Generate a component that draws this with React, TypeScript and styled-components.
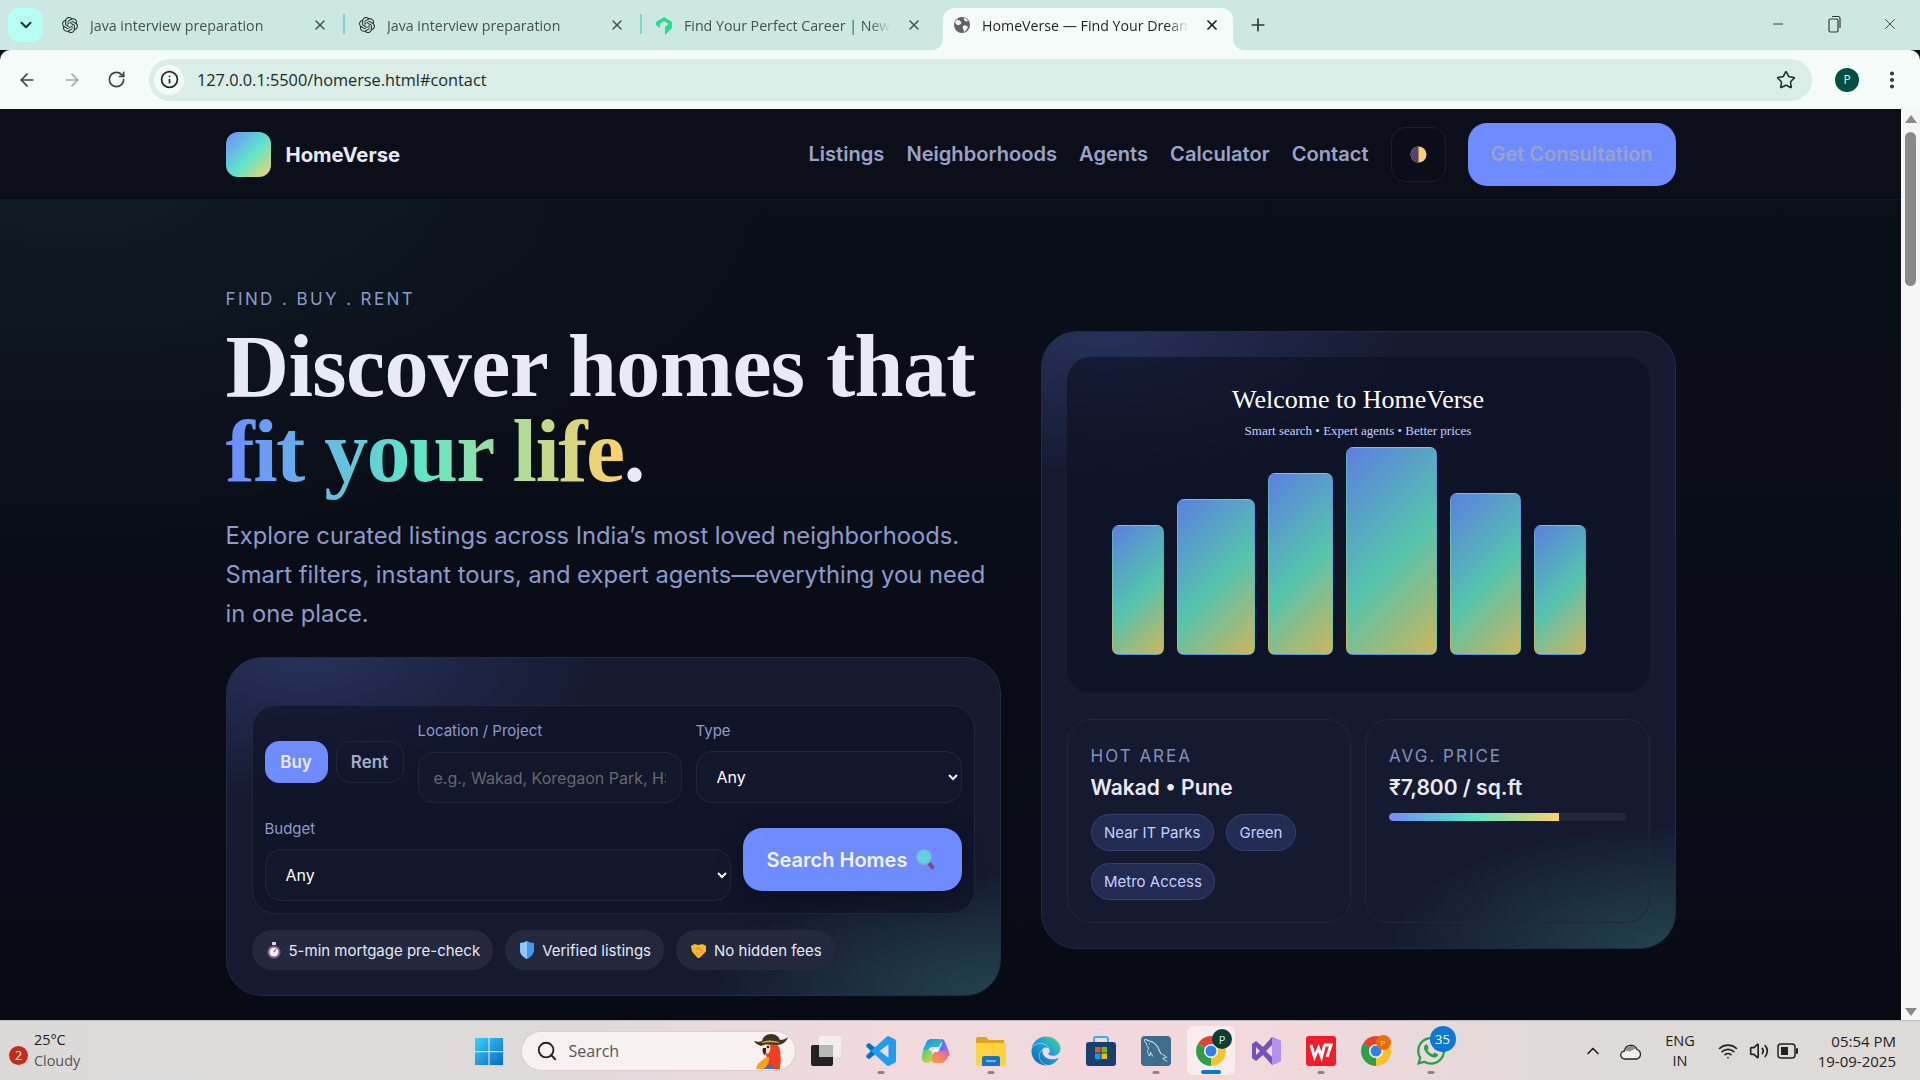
import { Fragment } from "react"
import styled, { createGlobalStyle } from "styled-components"
import {
  ArrowLeft,
  ArrowRight,
  RotateCw,
  Info,
  Star,
  EllipsisVertical,
  ChevronDown,
  ChevronUp,
  X,
  Plus,
  Minus,
  Search,
  Wifi,
  Volume2,
} from "lucide-react"
import { SiOpenai } from "react-icons/si"
import { GrMysql } from "react-icons/gr"
import { FaEdge, FaWhatsapp } from "react-icons/fa"

const GlobalStyle = createGlobalStyle`
  * { box-sizing: border-box; }
  html, body { margin: 0; padding: 0; height: 100%; overflow: hidden; }
  body { font-family: "Inter", "Liberation Sans", sans-serif; background: #0b0f1a; }
  #root { height: 100%; }
`

const Screen = styled.div`
  width: 1920px;
  height: 1080px;
  display: flex;
  flex-direction: column;
  overflow: hidden;
`

/* browser chrome */

const TabStrip = styled.div`
  height: 50px;
  flex: none;
  display: flex;
  align-items: flex-end;
  padding-left: 8px;
  background: #cde8e2;
  font-family: "Open Sans", "Noto Sans", sans-serif;
`

const TabSearch = styled.div`
  width: 35px;
  height: 34px;
  margin: 0 4px 8px 0;
  border-radius: 11px;
  background: #b6fdf3;
  color: #16302b;
  display: flex;
  align-items: center;
  justify-content: center;
`

const Tab = styled.div<{ $active?: boolean }>`
  position: relative;
  height: 42px;
  width: ${(p) => (p.$active ? 290 : 297)}px;
  margin-left: ${(p) => (p.$active ? 5 : 0)}px;
  padding: ${(p) => (p.$active ? "0 13px 8px 11px" : "0 16px 8px 15px")};
  display: flex;
  align-items: center;
  gap: 12px;
  border-radius: 12px 12px 0 0;
  background: ${(p) => (p.$active ? "#f5fbf8" : "transparent")};
  color: ${(p) => (p.$active ? "#1c2523" : "#44524e")};
  font-size: 14.2px;

  &::before,
  &::after {
    content: ${(p) => (p.$active ? '""' : "none")};
    position: absolute;
    bottom: 0;
    width: 12px;
    height: 12px;
  }
  &::before {
    left: -12px;
    background: radial-gradient(circle at 0 0, transparent 12px, #f5fbf8 12.5px);
  }
  &::after {
    right: -12px;
    background: radial-gradient(circle at 100% 0, transparent 12px, #f5fbf8 12.5px);
  }
`

const TabSeparator = styled.div`
  width: 2px;
  height: 20px;
  margin: 0 -1px 16px;
  background: #7fd6c9;
`

const TabIcon = styled.div`
  width: 16px;
  height: 16px;
  flex: none;
  display: flex;
  color: #26302e;
`

const TabTitle = styled.div`
  flex: 1;
  min-width: 0;
  margin-right: 4px;
  white-space: nowrap;
  overflow: hidden;
  -webkit-mask-image: linear-gradient(90deg, #000 90%, transparent);
  mask-image: linear-gradient(90deg, #000 90%, transparent);
`

const TabClose = styled.div<{ $active?: boolean }>`
  width: 16px;
  height: 16px;
  flex: none;
  display: flex;
  align-items: center;
  justify-content: center;
  color: ${(p) => (p.$active ? "#1c2523" : "#44524e")};
`

const NewTab = styled.div`
  width: 20px;
  height: 20px;
  margin: 0 0 15px 15px;
  color: #2c3a37;
  display: flex;
`

const WindowControls = styled.div`
  margin-left: auto;
  height: 100%;
  display: flex;
  align-items: center;
  padding-right: 21px;
  gap: 38px;
  color: #2c3a37;
`

const WindowButton = styled.div`
  width: 18px;
  height: 18px;
  margin-bottom: 2px;
  display: flex;
  align-items: center;
  justify-content: center;
`

const Toolbar = styled.div`
  height: 59px;
  flex: none;
  display: flex;
  align-items: center;
  background: #f5fbf8;
  border-radius: 10px 10px 0 0;
  padding: 0 14px 0 17px;
`

const NavIcon = styled.div<{ $dim?: boolean }>`
  width: 20px;
  height: 20px;
  margin-right: 25px;
  display: flex;
  color: ${(p) => (p.$dim ? "#a3b0ac" : "#3b4a47")};
`

const Omnibox = styled.div`
  width: 1663px;
  height: 42px;
  margin-left: -3px;
  display: flex;
  align-items: center;
  border-radius: 21px;
  background: #daede7;
  padding: 0 16px 0 5px;
  font-family: "Open Sans", "Noto Sans", sans-serif;
  font-size: 16.3px;
  color: #1c2b28;
`

const SiteInfo = styled.div`
  width: 30px;
  height: 30px;
  margin-right: 13px;
  border-radius: 50%;
  background: #f5fbf8;
  display: flex;
  align-items: center;
  justify-content: center;
  color: #1c2b28;
`

const BookmarkStar = styled(Star)`
  margin-left: auto;
`

const Avatar = styled.div`
  width: 24px;
  height: 24px;
  margin-left: 23px;
  border-radius: 50%;
  background: #014f41;
  color: #e4f5ef;
  font-size: 12px;
  font-family: "Open Sans", sans-serif;
  display: flex;
  align-items: center;
  justify-content: center;
`

const Menu = styled.div`
  margin-left: 22px;
  display: flex;
  color: #2c3a37;
`

const Viewport = styled.div`
  flex: 1;
  min-height: 0;
  display: flex;
`

const Scrollbar = styled.div`
  width: 19px;
  flex: none;
  display: flex;
  flex-direction: column;
  align-items: center;
  background: #f6f6f6;
  padding: 6px 0 4px;
`

const ScrollArrow = styled.div<{ $down?: boolean }>`
  width: 0;
  height: 0;
  border-left: 6px solid transparent;
  border-right: 6px solid transparent;
  ${(p) => (p.$down ? "border-top: 8px solid #8a8a8a; margin-top: auto;" : "border-bottom: 8px solid #8a8a8a;")}
`

const ScrollThumb = styled.div`
  width: 11px;
  height: 154px;
  margin-top: 9px;
  border-radius: 6px;
  background: #8a8a8a;
`

/* site */

const Site = styled.div`
  flex: 1;
  min-width: 0;
  overflow: hidden;
  background:
    radial-gradient(1000px 520px at 4% 8%, rgba(94, 230, 200, 0.06), transparent 70%),
    linear-gradient(180deg, #0b0f1a 0%, #080b14 100%);
`

const Header = styled.header`
  height: 91px;
  background: #0c0f1a;
  border-bottom: 1px solid rgba(255, 255, 255, 0.04);
`

const Container = styled.div`
  width: 1450px;
  margin: 0 auto;
`

const HeaderRow = styled(Container)`
  height: 100%;
  display: flex;
  align-items: center;
`

const Logo = styled.div`
  width: 45px;
  height: 45px;
  border-radius: 12px;
  background: linear-gradient(135deg, #6e8bff, #5ee6c8 55%, #ffd166);
`

const Brand = styled.div`
  margin-left: 15px;
  font-size: 20.3px;
  font-weight: 700;
  color: #e8ebf5;
`

const NavLinks = styled.nav`
  margin-left: auto;
  display: flex;
  align-items: center;
  gap: 22px;
`

const NavLink = styled.a`
  font-size: 20.1px;
  font-weight: 600;
  color: #9aa3c7;
`

const ThemeToggle = styled.div`
  width: 55px;
  height: 55px;
  border-radius: 14px;
  border: 1px solid #1b1f2e;
  background: #0b0e18;
  display: flex;
  align-items: center;
  justify-content: center;
`

const CtaButton = styled.div`
  width: 208px;
  height: 63px;
  border-radius: 19px;
  background: #6e8bff;
  color: #9aa3c7;
  font-size: 20px;
  font-weight: 600;
  display: flex;
  align-items: center;
  justify-content: center;
`

const Hero = styled(Container)`
  padding-top: 87px;
  display: grid;
  grid-template-columns: 775px 635px;
  column-gap: 40px;
  align-items: center;
`

const Eyebrow = styled.div`
  font-size: 17px;
  line-height: 24px;
  letter-spacing: 2.4px;
  color: #8d9acb;
`

const Headline = styled.h1`
  margin: 13px 0 0;
  font-family: "Liberation Serif", serif;
  font-weight: 700;
  font-size: 88px;
  line-height: 85px;
  letter-spacing: -0.6px;
  color: #e8ebf5;
`

const Rainbow = styled.span`
  letter-spacing: -1.6px;
  background: linear-gradient(90deg, #6e8bff, #5ee6c8 48%, #ffd166);
  -webkit-background-clip: text;
  background-clip: text;
  color: transparent;
`

const Lead = styled.p`
  margin: 22px 0 0;
  font-size: 23.76px;
  line-height: 39px;
  color: #8d9acb;
`

const Panel = styled.div`
  border-radius: 36px;
  border: 1px solid #232a44;
  background:
    radial-gradient(420px 200px at 10% 0%, rgba(110, 139, 255, 0.2), transparent 72%),
    radial-gradient(400px 170px at 100% 100%, rgba(94, 230, 200, 0.2), transparent 72%),
    #151a30;
`

const SearchPanel = styled(Panel)`
  margin-top: 24px;
  height: 339px;
  padding: 47px 25px 0;
`

const SearchBox = styled.div`
  height: 209px;
  border: 1px solid #20263e;
  border-radius: 24px;
  background: rgba(13, 17, 36, 0.6);
  padding: 14px 12px 12px;
  display: flex;
  flex-direction: column;
  gap: 15px;
`

const SearchRow = styled.div<{ $gap: number }>`
  display: flex;
  align-items: center;
  gap: ${(p) => p.$gap}px;
`

const Toggle = styled.div`
  display: flex;
  flex: none;
  gap: 8px;
`

const ToggleButton = styled.div<{ $on?: boolean }>`
  width: ${(p) => (p.$on ? 63 : 68)}px;
  height: 42px;
  border-radius: 14px;
  border: 1px solid ${(p) => (p.$on ? "#6e8bff" : "#20263e")};
  background: ${(p) => (p.$on ? "#6e8bff" : "transparent")};
  color: ${(p) => (p.$on ? "#e8ebf5" : "#a6aecd")};
  font-size: 17px;
  font-weight: 600;
  display: flex;
  align-items: center;
  justify-content: center;
`

const Field = styled.label<{ $width?: number }>`
  ${(p) => (p.$width ? `width: ${p.$width}px; flex: none;` : "flex: 1;")}
  display: flex;
  flex-direction: column;
  gap: 10px;
  min-width: 0;
`

const FieldLabel = styled.span`
  font-size: 15px;
  line-height: 21px;
  color: #8d9acb;
`

const TextInput = styled.input`
  height: 51px;
  width: 100%;
  margin-top: 1px;
  padding: 0 15px;
  border-radius: 16px;
  border: 1px solid #20263e;
  background: #12172b;
  color: #fff;
  font: 400 16px "Inter", sans-serif;
  outline: none;

  &::placeholder {
    color: #66676f;
  }
`

const Dropdown = styled.select`
  height: 52px;
  width: 100%;
  padding: 0 16px;
  border-radius: 16px;
  border: 1px solid #20263e;
  background: #12172b;
  color: #fff;
  font: 400 16px "Inter", sans-serif;
  outline: none;
`

const SearchButton = styled.div`
  width: 219px;
  height: 63px;
  flex: none;
  border-radius: 19px;
  background: #6e8bff;
  color: #f2f4ff;
  font-size: 20px;
  font-weight: 600;
  display: flex;
  align-items: center;
  justify-content: center;
  gap: 9px;
  box-shadow: 0 10px 24px rgba(0, 0, 0, 0.25);
`

const Perks = styled.div`
  margin-top: 16px;
  display: flex;
  gap: 12px;
`

const Perk = styled.div`
  height: 40px;
  padding: 0 13px 0 15px;
  border-radius: 20px;
  background: #23283f;
  color: #e4e8f6;
  font-size: 15px;
  display: flex;
  align-items: center;
  gap: 8px;
`

const ShowcasePanel = styled(Panel)`
  margin-bottom: 3px;
  padding: 25px;
  display: flex;
  flex-direction: column;
  gap: 26px;
`

const Visual = styled.div`
  height: 336px;
  border-radius: 24px;
  background: rgba(11, 15, 34, 0.6);
  display: flex;
  flex-direction: column;
  font-family: "Liberation Serif", serif;
  text-align: center;
`

const VisualTitle = styled.div`
  margin-top: 28px;
  font-size: 26px;
  line-height: 30px;
  color: #fff;
`

const VisualSubtitle = styled.div`
  margin-top: 8px;
  font-size: 13px;
  line-height: 16px;
  color: #c5d0ff;
`

const Bars = styled.div`
  height: 208px;
  margin-top: 8px;
  padding-left: 45px;
  display: flex;
  align-items: flex-end;
  gap: 13px;
`

const Bar = styled.div<{ $w: number; $h: number }>`
  width: ${(p) => p.$w}px;
  height: ${(p) => p.$h}px;
  border-radius: 7px;
  border: 1px solid rgba(255, 255, 255, 0.05);
  background: linear-gradient(135deg, #5c7fe0, #55c4ae 54%, #cfb45c);
`

const Stats = styled.div`
  display: grid;
  grid-template-columns: 1fr 1fr;
  gap: 14px;
`

const Stat = styled.div`
  height: 204px;
  padding: 25px 23px 0;
  border-radius: 24px;
  border: 1px solid #20263e;
`

const StatLabel = styled.div`
  font-size: 17px;
  line-height: 22px;
  letter-spacing: 2px;
  color: #8290bf;
`

const StatValue = styled.div`
  margin-top: 7px;
  font-size: 21px;
  line-height: 28px;
  font-weight: 600;
  color: #e8ebf5;
`

const Tags = styled.div`
  margin-top: 12px;
  display: flex;
  flex-wrap: wrap;
  gap: 12px;
`

const TagChip = styled.div`
  height: 37px;
  padding: 0 12.5px;
  border-radius: 19px;
  border: 1px solid #364275;
  background: #222b52;
  color: #c5d0ff;
  font-size: 15px;
  display: flex;
  align-items: center;
`

const Meter = styled.div`
  height: 8px;
  margin-top: 11px;
  border-radius: 4px;
  background: #222739;
  overflow: hidden;
`

const MeterFill = styled.div`
  height: 100%;
  border-radius: 4px 0 0 4px;
  background: linear-gradient(90deg, #6e8bff, #5ee6c8 50%, #ffd166);
`

/* taskbar */

const Taskbar = styled.div`
  height: 60px;
  flex: none;
  display: grid;
  grid-template-columns: 1fr auto 1fr;
  align-items: center;
  background: linear-gradient(90deg, #dcdad8 0%, #dedad9 28%, #f1d9dd 46%, #f3d8dc 66%, #dddad8 84%);
  border-top: 1px solid #bdbdbd;
  font-family: "Open Sans", "Noto Sans", sans-serif;
  color: #222;
`

const Weather = styled.div`
  display: flex;
  align-items: center;
  padding-left: 9px;
`

const AlertDot = styled.div`
  width: 19px;
  height: 19px;
  margin-top: 9px;
  border-radius: 50%;
  background: #c42b1c;
  color: #fff;
  font-size: 12.5px;
  display: flex;
  align-items: center;
  justify-content: center;
`

const WeatherText = styled.div`
  margin-left: 6px;
  padding-bottom: 2px;
  font-size: 14.4px;
  line-height: 21px;
  color: #1e1e1e;

  span {
    display: block;
    color: #555;
  }
`

const Dock = styled.div`
  display: flex;
  align-items: center;
`

const Slot = styled.div<{ $active?: boolean }>`
  position: relative;
  width: 55px;
  height: 59px;
  display: flex;
  align-items: center;
  justify-content: center;
  &::before {
    content: ${(p) => (p.$active ? '""' : "none")};
    position: absolute;
    left: 3.5px;
    right: 3.5px;
    top: 5px;
    bottom: 5px;
    border-radius: 6px;
    background: rgba(255, 255, 255, 0.5);
  }
  svg {
    position: relative;
  }
`

const RunDot = styled.div<{ $active?: boolean }>`
  position: absolute;
  bottom: 6px;
  left: 50%;
  transform: translateX(-50%);
  width: ${(p) => (p.$active ? 20 : 7)}px;
  height: ${(p) => (p.$active ? 4 : 3)}px;
  border-radius: 2px;
  background: ${(p) => (p.$active ? "#0a78d4" : "#8a8584")};
`

const CountBadge = styled.div`
  position: absolute;
  top: 5px;
  right: 3px;
  width: 26px;
  height: 26px;
  border-radius: 50%;
  background: #0a78d4;
  color: #fff;
  font-size: 13px;
  display: flex;
  align-items: center;
  justify-content: center;
`

const SearchPill = styled.div`
  width: 273px;
  height: 38px;
  margin: 0 4px 0 5px;
  padding: 0 6px 0 14px;
  border-radius: 19px;
  background: #f8f1f2;
  box-shadow: 0 0 0 1px #e3ccd1;
  display: flex;
  align-items: center;
  gap: 11px;
  color: #555;
  font-size: 16px;
`

const Mascot = styled.svg`
  margin-left: auto;
`

const Tray = styled.div`
  display: flex;
  align-items: center;
  justify-content: flex-end;
  padding-right: 24px;
  color: #222;
`

const TrayIcon = styled.div<{ $gap: number }>`
  display: flex;
  margin-right: ${(p) => p.$gap}px;
`

const TrayText = styled.div<{ $right?: boolean; $gap: number }>`
  font-size: ${(p) => (p.$right ? 15 : 14.5)}px;
  line-height: 20px;
  text-align: ${(p) => (p.$right ? "right" : "center")};
  margin-right: ${(p) => p.$gap}px;
`

const Windows = () => (
  <svg width="28" height="28" viewBox="0 0 28 28">
    <defs>
      <linearGradient id="win" x1="0" y1="0" x2="1" y2="1">
        <stop offset="0" stopColor="#3fd0fb" />
        <stop offset="1" stopColor="#0569c6" />
      </linearGradient>
    </defs>
    <path fill="url(#win)" d="M0 1h13.4v13H0zM14.6 1H28v13H14.6zM0 15.2h13.4V28H0zM14.6 15.2H28V28H14.6z" />
  </svg>
)

const Parrot = () => (
  <Mascot width="36" height="36" viewBox="0 0 36 36">
    <path fill="#ee3f24" d="M12 13c3-3 12-3 14 1 2 5 2 14 1 22H6c1-5 5-8 8-12-2-3-3-7-2-11z" />
    <path fill="#f7a11c" d="M3 36c1-6 6-10 13-12 1 4-2 9-5 12z" />
    <path fill="#1f7ad1" d="M11 36c2-2 5-4 9-4l-1 4z" />
    <path fill="#f3e4cc" d="M10 12h7c1 3 0 7-2 9-3-1-5-4-5-9z" />
    <path fill="#2a2320" d="M10 15c-1 3 0 6 2 7 1-2 1-5 1-7z" />
    <circle cx="15" cy="14" r="1.3" fill="#222" />
    <path fill="#3f3320" d="M1 8c4 1 6 1 8 0 1-4 4-7 9-7s8 3 9 6c3 0 6-1 8-3-1 4-5 8-11 8-6-1-12-1-16 1-3-1-6-3-7-5z" />
    <path fill="#d2a93a" d="M9 9c5-2 11-2 17 0v1c-6-1-12-1-17 0z" />
  </Mascot>
)

const TaskView = () => (
  <svg width="30" height="30" viewBox="0 0 30 30">
    <rect x="0" y="9" width="22" height="21" rx="2" fill="#222" />
    <rect x="8" y="0" width="22" height="21" rx="2" fill="#f4f1f1" opacity="0.9" />
    <rect x="8" y="9" width="14" height="12" fill="#b9b6b6" />
  </svg>
)

const VsCode = () => (
  <svg width="30" height="30" viewBox="0 0 24 24">
    <path
      fill="#1f9cf0"
      d="M23.15 2.587L18.21.21a1.494 1.494 0 0 0-1.705.29l-9.46 8.63-4.12-3.128a.999.999 0 0 0-1.276.057L.327 7.261A1 1 0 0 0 .326 8.74L3.899 12 .326 15.26a1 1 0 0 0 .001 1.479L1.65 17.94a.999.999 0 0 0 1.276.057l4.12-3.128 9.46 8.63a1.492 1.492 0 0 0 1.704.29l4.942-2.377A1.5 1.5 0 0 0 24 20.06V3.939a1.5 1.5 0 0 0-.85-1.352zm-5.146 14.861L10.826 12l7.178-5.448v10.896z"
    />
    <path fill="#0e6fb3" d="M.33 7.26 1.65 6.06a1 1 0 0 1 1.28-.06l4.12 3.13L3.9 12zM.33 16.74 1.65 17.94a1 1 0 0 0 1.28.06l4.12-3.13L3.9 12z" />
  </svg>
)

const Copilot = () => (
  <svg width="30" height="30" viewBox="0 0 30 30">
    <defs>
      <linearGradient id="copBlue" x1="0" y1="0" x2="1" y2="1">
        <stop offset="0" stopColor="#1b8ef0" />
        <stop offset="1" stopColor="#2fd6a0" />
      </linearGradient>
      <linearGradient id="copGreen" x1="0" y1="0" x2="1" y2="1">
        <stop offset="0" stopColor="#3fd07a" />
        <stop offset="1" stopColor="#f4d03f" />
      </linearGradient>
      <linearGradient id="copPurple" x1="0" y1="0" x2="1" y2="1">
        <stop offset="0" stopColor="#3b7cf2" />
        <stop offset="1" stopColor="#c05ce8" />
      </linearGradient>
      <linearGradient id="copOrange" x1="1" y1="0" x2="0" y2="1">
        <stop offset="0" stopColor="#e85fa8" />
        <stop offset="1" stopColor="#f9a33c" />
      </linearGradient>
    </defs>
    <path fill="url(#copBlue)" d="M10 3h8c2 0 3 1 3 2l-3 6h-8l-3 3H2l3-7c1-3 3-4 5-4z" />
    <path fill="url(#copGreen)" d="M2 14h7l4 6-2 4c-1 2-2 3-5 3-3 0-6-3-5-7z" />
    <path fill="url(#copPurple)" d="M20 3c2 0 3 1 4 3l4 10c0 1 1 3 0 4h-7l-3-6 3-6z" />
    <path fill="url(#copOrange)" d="M11 21l3-6h14c0 6-3 12-9 12h-5c-3 0-4-3-3-6z" />
    <path fill="#f4f6ff" d="M13 13h5l-1 3h-5z" />
  </svg>
)

const Folder = () => (
  <svg width="30" height="30" viewBox="0 0 30 30">
    <path fill="#dea21c" d="M0 3c0-1 1-2 2-2h8l3 3h15v6H0z" />
    <path fill="#ffd33f" d="M0 7h30v21c0 1-1 2-2 2H2c-1 0-2-1-2-2z" />
    <path fill="#1b72c4" d="M6 22c0-1 1-2 2-2h14c1 0 2 1 2 2v8H6z" />
    <rect x="10" y="24" width="10" height="2" fill="#6db7ec" />
  </svg>
)

const Edge = () => (
  <>
    <svg width="0" height="0" style={{ position: "absolute" }}>
      <defs>
        <linearGradient id="edgeFill" x1="0" y1="1" x2="1" y2="0">
          <stop offset="0" stopColor="#0f5fb4" />
          <stop offset="0.6" stopColor="#1da7d8" />
          <stop offset="1" stopColor="#5ddb6f" />
        </linearGradient>
      </defs>
    </svg>
    <FaEdge size={30} style={{ fill: "url(#edgeFill)" }} />
  </>
)

const Store = () => (
  <svg width="30" height="30" viewBox="0 0 30 30">
    <path fill="none" stroke="#2bb8e8" strokeWidth="2" d="M8 8V3c0-1 1-2 2-2h10c1 0 2 1 2 2v5" />
    <rect x="0" y="6" width="30" height="24" rx="3" fill="#17406f" />
    <rect x="9" y="11" width="5.5" height="5.5" fill="#f25022" />
    <rect x="15.5" y="11" width="5.5" height="5.5" fill="#7fba00" />
    <rect x="9" y="17.5" width="5.5" height="5.5" fill="#00a4ef" />
    <rect x="15.5" y="17.5" width="5.5" height="5.5" fill="#ffb900" />
  </svg>
)

const Workbench = styled.div`
  width: 30px;
  height: 30px;
  border-radius: 4px;
  background: #3e6d8e;
  color: #dbe6ee;
  display: flex;
  align-items: center;
  justify-content: center;
`

const Chrome = () => (
  <svg width="30" height="30" viewBox="0 0 24 24">
    <path fill="#e5432f" d="M12 12 1.61 6A12 12 0 0 1 22.39 6Z" />
    <path fill="#fbc02d" d="M12 12 22.39 6A12 12 0 0 1 12 24Z" />
    <path fill="#2f9e48" d="M12 12 12 24A12 12 0 0 1 1.61 6Z" />
    <circle cx="12" cy="12" r="5.6" fill="#fff" />
    <circle cx="12" cy="12" r="4.4" fill="#2f7ff0" />
  </svg>
)

const VisualStudio = () => (
  <svg width="30" height="30" viewBox="0 0 30 30">
    <path
      fill="#7355b5"
      fillRule="evenodd"
      d="M21 1l9 4v20l-9 4-9-10-7 6-4-3V8l4-3 7 6zM21 9l-6 6 6 6zM5 11v8l4-4z"
    />
    <path fill="#b48ff0" d="M21 1l9 4v20l-9 4v-8V9z" />
  </svg>
)

const ProfileBadge = styled.div<{ $orange?: boolean }>`
  position: absolute;
  top: ${(p) => (p.$orange ? 13.5 : 8)}px;
  right: ${(p) => (p.$orange ? 13 : 6.5)}px;
  width: ${(p) => (p.$orange ? 15 : 20)}px;
  height: ${(p) => (p.$orange ? 15 : 20)}px;
  border-radius: 50%;
  background: ${(p) => (p.$orange ? "#ef6c00" : "#0e3d33")};
  color: ${(p) => (p.$orange ? "#ffe6cf" : "#d5ece5")};
  font-size: ${(p) => (p.$orange ? 8 : 11)}px;
  display: flex;
  align-items: center;
  justify-content: center;
`

const Wps = () => (
  <svg width="30" height="30" viewBox="0 0 30 30">
    <rect width="30" height="30" rx="3" fill="#f21c2b" />
    <path fill="none" stroke="#fff" strokeWidth="3" d="M5 9l3.5 12 4-9 3 9 3-12M18 9h7l-4 12" />
  </svg>
)

const HalfMoon = () => (
  <svg width="17" height="17" viewBox="0 0 17 17">
    <circle cx="8.5" cy="8.5" r="8" fill="#f7cf6b" />
    <path fill="#57406f" d="M8.5.5a8 8 0 0 0 0 16z" />
  </svg>
)

const Magnifier = () => (
  <svg width="21" height="21" viewBox="0 0 21 21">
    <rect x="12.5" y="12" width="4" height="9" rx="2" fill="#7c4a8a" transform="rotate(-40 14.5 16)" />
    <circle cx="8" cy="8" r="7.4" fill="#5fd0e6" stroke="#8fa2c4" strokeWidth="1.2" />
  </svg>
)

const Stopwatch = () => (
  <svg width="14" height="17" viewBox="0 0 14 17">
    <rect x="5" y="0" width="4" height="3" fill="#d9cfe0" />
    <circle cx="7" cy="10" r="6.6" fill="#7a5a86" />
    <circle cx="7" cy="10" r="4.6" fill="#f3eef4" />
    <path stroke="#d8345f" strokeWidth="1.2" d="M7 10l2-3" />
  </svg>
)

const Shield = () => (
  <svg width="14" height="18" viewBox="0 0 14 18">
    <path fill="#3f9cf0" d="M7 0c2 1 4 2 7 2v7c0 4-3 7-7 9-4-2-7-5-7-9V2c3 0 5-1 7-2z" />
    <path fill="#8cc8f8" d="M7 0c-2 1-4 2-7 2v7c0 4 3 7 7 9z" />
  </svg>
)

const Handshake = () => (
  <svg width="15" height="15" viewBox="0 0 16 16">
    <path fill="#f5b52e" d="M0 3l4-2 4 1 4-1 4 2v6l-7 7H7L1 9z" />
    <path fill="none" stroke="#c98412" strokeWidth="1" d="M5 7l3-2 4 4M6 10l2 2" />
  </svg>
)

const CareerMark = () => (
  <svg width="16" height="18" viewBox="0 0 16 18">
    <path fill="#1fe08e" d="M8 0l8 5v6l-7 7v-8l3-2.5V6.5L8 4 4 6.5V11L0 8V5z" />
  </svg>
)

const Globe = () => (
  <svg width="16" height="16" viewBox="0 0 16 16">
    <circle cx="8" cy="8" r="8" fill="#5f6368" />
    <path fill="#f5fbf8" d="M3 2.5c2 1 3 1 4 2.5s-1 3-3 3-2-2-3-2c0-1 1-2.5 2-3.5zM9 9c2-1 4 0 5 1-1 2-2 4-4 5 0-2-2-4-1-6zM10 1c1 0 3 1 4 3-1 1-3 0-4-1z" />
  </svg>
)

const RestoreIcon = () => (
  <svg width="16" height="18" viewBox="0 0 16 18">
    <rect x="3" y="4" width="9" height="13" rx="1.5" fill="none" stroke="currentColor" strokeWidth="1.2" />
    <path fill="none" stroke="currentColor" strokeWidth="1.2" d="M6 1.5h6a2 2 0 0 1 2 2V13" />
  </svg>
)

const BatteryIcon = () => (
  <svg width="22" height="18" viewBox="0 0 22 18">
    <rect x="1" y="2" width="17" height="14" rx="3" fill="none" stroke="#222" strokeWidth="1.5" />
    <rect x="4" y="5" width="7" height="8" fill="#222" />
    <rect x="19" y="6" width="2" height="6" rx="1" fill="#222" />
  </svg>
)

const CloudIcon = () => (
  <svg width="22" height="20" viewBox="0 0 22 20">
    <path fill="#f2f0ee" stroke="#222" strokeWidth="1.3" d="M5 18a4 4 0 0 1-.5-8A6.5 6.5 0 0 1 17 8.5 5 5 0 0 1 17 18z" />
    <path fill="#8d8d8d" d="M5.5 9.5A6 6 0 0 1 16.5 8c-3 0-5 1-6 2.5-2-.5-3.5-.5-5-1z" />
  </svg>
)

const tabs = [
  { title: "Java interview preparation", icon: <SiOpenai size={16} /> },
  { title: "Java interview preparation", icon: <SiOpenai size={16} /> },
  { title: "Find Your Perfect Career | New Path", icon: <CareerMark /> },
]

const bars = [
  { w: 52, h: 130 },
  { w: 78, h: 156 },
  { w: 65, h: 182 },
  { w: 91, h: 208 },
  { w: 71, h: 162 },
  { w: 52, h: 130 },
]

export default function App() {
  return (
    <Screen>
      <GlobalStyle />
      <TabStrip>
        <TabSearch>
          <ChevronDown size={18} strokeWidth={2.6} />
        </TabSearch>
        {tabs.map((tab, i) => (
          <Fragment key={i}>
            <Tab>
              <TabIcon>{tab.icon}</TabIcon>
              <TabTitle>{tab.title}</TabTitle>
              <TabClose>
                <X size={16} strokeWidth={2.2} />
              </TabClose>
            </Tab>
            {i < 2 && <TabSeparator />}
          </Fragment>
        ))}
        <Tab $active>
          <TabIcon>
            <Globe />
          </TabIcon>
          <TabTitle>HomeVerse — Find Your Dream Home</TabTitle>
          <TabClose $active>
            <X size={16} strokeWidth={2.6} />
          </TabClose>
        </Tab>
        <NewTab>
          <Plus size={20} />
        </NewTab>
        <WindowControls>
          <WindowButton>
            <Minus size={16} strokeWidth={1.4} />
          </WindowButton>
          <WindowButton>
            <RestoreIcon />
          </WindowButton>
          <WindowButton>
            <X size={20} strokeWidth={1.2} />
          </WindowButton>
        </WindowControls>
      </TabStrip>

      <Toolbar>
        <NavIcon>
          <ArrowLeft size={20} />
        </NavIcon>
        <NavIcon $dim>
          <ArrowRight size={20} />
        </NavIcon>
        <NavIcon>
          <RotateCw size={19} strokeWidth={2.2} />
        </NavIcon>
        <Omnibox>
          <SiteInfo>
            <Info size={19} strokeWidth={2.2} />
          </SiteInfo>
          127.0.0.1:5500/homerse.html#contact
          <BookmarkStar size={20} strokeWidth={1.8} />
        </Omnibox>
        <Avatar>P</Avatar>
        <Menu>
          <EllipsisVertical size={22} strokeWidth={2.4} />
        </Menu>
      </Toolbar>

      <Viewport>
        <Site>
          <Header>
            <HeaderRow>
              <Logo />
              <Brand>HomeVerse</Brand>
              <NavLinks>
                <NavLink>Listings</NavLink>
                <NavLink>Neighborhoods</NavLink>
                <NavLink>Agents</NavLink>
                <NavLink>Calculator</NavLink>
                <NavLink>Contact</NavLink>
                <ThemeToggle>
                  <HalfMoon />
                </ThemeToggle>
                <CtaButton>Get Consultation</CtaButton>
              </NavLinks>
            </HeaderRow>
          </Header>

          <Hero>
            <div>
              <Eyebrow>FIND . BUY . RENT</Eyebrow>
              <Headline>
                Discover homes that
                <br />
                <Rainbow>fit your life</Rainbow>.
              </Headline>
              <Lead>
                Explore curated listings across India’s most loved neighborhoods. Smart filters, instant tours, and
                expert agents—everything you need in one place.
              </Lead>
              <SearchPanel>
                <SearchBox>
                  <SearchRow $gap={14}>
                    <Toggle>
                      <ToggleButton $on>Buy</ToggleButton>
                      <ToggleButton>Rent</ToggleButton>
                    </Toggle>
                    <Field>
                      <FieldLabel>Location / Project</FieldLabel>
                      <TextInput placeholder="e.g., Wakad, Koregaon Park, HSR" />
                    </Field>
                    <Field $width={266}>
                      <FieldLabel>Type</FieldLabel>
                      <Dropdown defaultValue="Any">
                        <option>Any</option>
                      </Dropdown>
                    </Field>
                  </SearchRow>
                  <SearchRow $gap={12}>
                    <Field>
                      <FieldLabel>Budget</FieldLabel>
                      <Dropdown defaultValue="Any">
                        <option>Any</option>
                      </Dropdown>
                    </Field>
                    <SearchButton>
                      Search Homes <Magnifier />
                    </SearchButton>
                  </SearchRow>
                </SearchBox>
                <Perks>
                  <Perk>
                    <Stopwatch /> 5-min mortgage pre-check
                  </Perk>
                  <Perk>
                    <Shield /> Verified listings
                  </Perk>
                  <Perk>
                    <Handshake /> No hidden fees
                  </Perk>
                </Perks>
              </SearchPanel>
            </div>

            <ShowcasePanel>
              <Visual>
                <VisualTitle>Welcome to HomeVerse</VisualTitle>
                <VisualSubtitle>Smart search • Expert agents • Better prices</VisualSubtitle>
                <Bars>
                  {bars.map((bar, i) => (
                    <Bar key={i} $w={bar.w} $h={bar.h} />
                  ))}
                </Bars>
              </Visual>
              <Stats>
                <Stat>
                  <StatLabel>HOT AREA</StatLabel>
                  <StatValue>Wakad • Pune</StatValue>
                  <Tags>
                    <TagChip>Near IT Parks</TagChip>
                    <TagChip>Green</TagChip>
                    <TagChip>Metro Access</TagChip>
                  </Tags>
                </Stat>
                <Stat>
                  <StatLabel>AVG. PRICE</StatLabel>
                  <StatValue>₹7,800 / sq.ft</StatValue>
                  <Meter>
                    <MeterFill style={{ width: "72%" }} />
                  </Meter>
                </Stat>
              </Stats>
            </ShowcasePanel>
          </Hero>
        </Site>
        <Scrollbar>
          <ScrollArrow />
          <ScrollThumb />
          <ScrollArrow $down />
        </Scrollbar>
      </Viewport>

      <Taskbar>
        <Weather>
          <AlertDot>2</AlertDot>
          <WeatherText>
            25°C
            <span>Cloudy</span>
          </WeatherText>
        </Weather>
        <Dock>
          <Slot>
            <Windows />
          </Slot>
          <SearchPill>
            <Search size={22} color="#222" strokeWidth={2} />
            Search
            <Parrot />
          </SearchPill>
          <Slot>
            <TaskView />
          </Slot>
          <Slot>
            <VsCode />
            <RunDot />
          </Slot>
          <Slot>
            <Copilot />
          </Slot>
          <Slot>
            <Folder />
            <RunDot />
          </Slot>
          <Slot>
            <Edge />
          </Slot>
          <Slot>
            <Store />
          </Slot>
          <Slot>
            <Workbench>
              <GrMysql size={24} />
            </Workbench>
            <RunDot />
          </Slot>
          <Slot $active>
            <Chrome />
            <ProfileBadge>P</ProfileBadge>
            <RunDot $active />
          </Slot>
          <Slot>
            <VisualStudio />
          </Slot>
          <Slot>
            <Wps />
            <RunDot />
          </Slot>
          <Slot>
            <Chrome />
            <ProfileBadge $orange>P</ProfileBadge>
          </Slot>
          <Slot>
            <FaWhatsapp size={32} color="#2d9e4f" />
            <CountBadge>35</CountBadge>
            <RunDot />
          </Slot>
        </Dock>
        <Tray>
          <TrayIcon $gap={17}>
            <ChevronUp size={20} />
          </TrayIcon>
          <TrayIcon $gap={23}>
            <CloudIcon />
          </TrayIcon>
          <TrayText $gap={23}>
            ENG
            <br />
            IN
          </TrayText>
          <TrayIcon $gap={11}>
            <Wifi size={20} />
          </TrayIcon>
          <TrayIcon $gap={8}>
            <Volume2 size={20} />
          </TrayIcon>
          <TrayIcon $gap={19}>
            <BatteryIcon />
          </TrayIcon>
          <TrayText $right $gap={0}>
            05:54 PM
            <br />
            19-09-2025
          </TrayText>
        </Tray>
      </Taskbar>
    </Screen>
  )
}
